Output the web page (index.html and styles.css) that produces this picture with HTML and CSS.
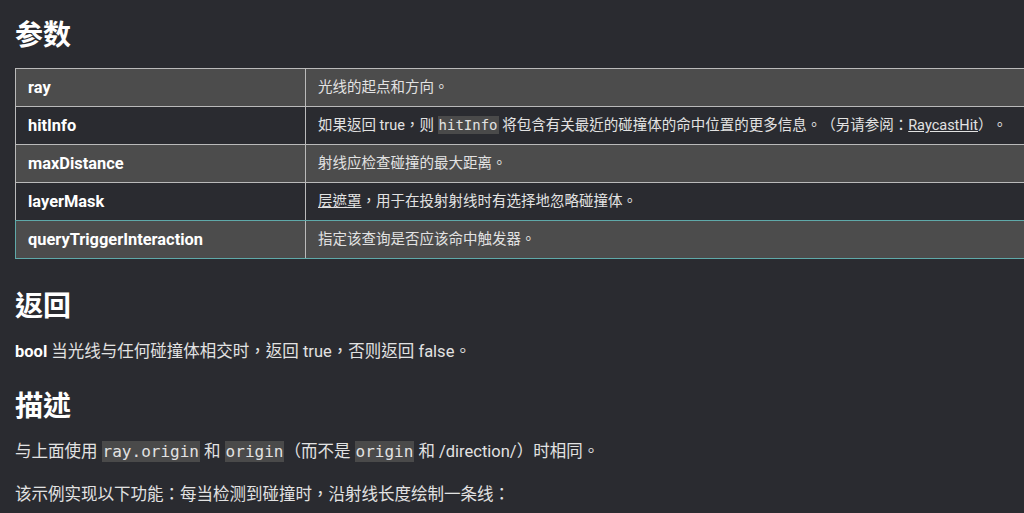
FILE: index.html
```html
<!DOCTYPE html>
<html lang="zh-TW">
<head>
<meta charset="utf-8">
<title>参数</title>
<link rel="stylesheet" href="styles.css">
</head>
<body>
<main class="doc">
  <h2 class="heading">参数</h2>
  <table class="params">
    <tr class="odd"><td class="name">ray</td><td class="desc">光线的起点和方向。</td></tr>
    <tr><td class="name">hitInfo</td><td class="desc">如果返回 true，则 <code>hitInfo</code> 将包含有关最近的碰撞体的命中位置的更多信息。（另请参阅：<a href="#">RaycastHit</a>）。</td></tr>
    <tr class="odd"><td class="name">maxDistance</td><td class="desc">射线应检查碰撞的最大距离。</td></tr>
    <tr class="pre-focus"><td class="name">layerMask</td><td class="desc"><a href="#">层遮罩</a>，用于在投射射线时有选择地忽略碰撞体。</td></tr>
    <tr class="odd focus"><td class="name">queryTriggerInteraction</td><td class="desc">指定该查询是否应该命中触发器。</td></tr>
  </table>

  <h2 class="heading returns">返回</h2>
  <p class="text"><b>bool</b> 当光线与任何碰撞体相交时，返回 true，否则返回 false。</p>

  <h2 class="heading describe">描述</h2>
  <p class="text first">与上面使用 <code>ray.origin</code> 和 <code>origin</code>（而不是 <code>origin</code> 和 /direction/）时相同。</p>
  <p class="text">该示例实现以下功能：每当检测到碰撞时，沿射线长度绘制一条线：</p>
</main>
</body>
</html>
```

FILE: styles.css
```css
html, body {
  margin: 0;
  padding: 0;
  background: #2a2b30;
  overflow: hidden;
}

.doc {
  padding: 18px 0 0 15px;
  color: #e2e2e2;
  font-family: Roboto, "Noto Sans CJK TC", sans-serif;
  text-spacing-trim: space-all;
}

.heading {
  margin: 0;
  font-size: 28px;
  line-height: 36px;
  font-weight: 700;
  color: #ffffff;
}

.params {
  margin-top: 14px;
  width: 1060px;
  border-collapse: collapse;
  font-size: 14.5px;
}

.params td {
  border: 1px solid #bababa;
  padding: 0 12px;
  height: 37px;
  line-height: 37px;
  white-space: nowrap;
  color: #e2e2e2;
}

.params tr.odd {
  background: #4c4c4c;
}

.params .name {
  width: 265px;
  font-size: 16.4px;
  font-weight: 700;
  color: #ffffff;
}

.params tr.pre-focus td {
  border-bottom-color: #5fa9a9;
}

.params tr.focus td {
  border-top-color: #5fa9a9;
  border-bottom-color: #5fa9a9;
}

.params tr.focus td.name {
  border-left-color: #5fa9a9;
}

code {
  font-family: "DejaVu Sans Mono", monospace;
  background: #4a4a4a;
  padding: 1px 1px;
  font-size: 16px;
}

.params code {
  font-size: 14px;
}

a {
  color: inherit;
  text-decoration: underline;
}

.returns {
  margin-top: 30px;
}

.text {
  margin: 15px 0 0;
  font-size: 16.5px;
  line-height: 24px;
}

.text b {
  font-weight: 700;
  color: #ffffff;
}

.describe {
  margin-top: 25px;
}

.text.first {
  margin-bottom: 0;
}

.text.first + .text {
  margin-top: 19px;
}
```
